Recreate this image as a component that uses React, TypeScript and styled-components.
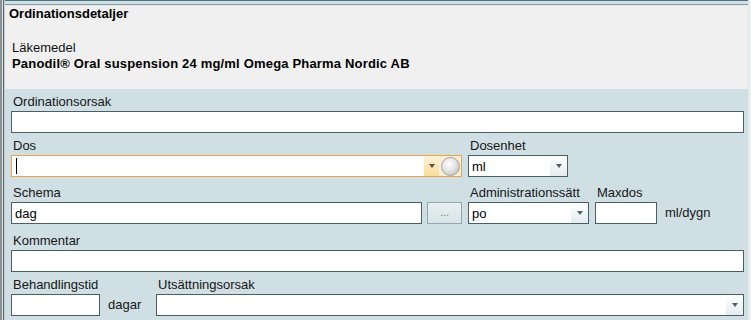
import styled, { createGlobalStyle } from 'styled-components';

const GlobalStyle = createGlobalStyle`
  html, body {
    margin: 0;
    padding: 0;
    background: #cfdfe3;
  }
  body {
    font-family: 'Liberation Sans', Arial, sans-serif;
    font-size: 13px;
    color: #111;
  }
`;

const Frame = styled.div`
  width: 751px;
  height: 320px;
  overflow: hidden;
  display: flex;
`;

const LeftRail = styled.div`
  flex: 0 0 5px;
  background: linear-gradient(
    to right,
    #87918f 0 2px,
    #e2e6e7 2px 3px,
    #56636a 3px 4px,
    #c6cfd2 4px 5px
  );
`;

const RightRail = styled.div`
  flex: 0 0 3px;
  background: linear-gradient(to right, #dbe6e9, #f2f5f6);
`;

const Column = styled.div`
  flex: 1;
  display: flex;
  flex-direction: column;
  min-width: 0;
`;

const TopRail = styled.div`
  flex: 0 0 6px;
  background: linear-gradient(
    to bottom,
    #4f7079 0 1px,
    #cde1e8 1px 4px,
    #8d9ba1 4px 5px,
    #e4e6e6 5px 6px
  );
`;

const Header = styled.div`
  flex: 0 0 83px;
  box-sizing: border-box;
  background: #f0f0f0;
  padding: 1px 0 0 4px;
`;

const Title = styled.div`
  font-weight: bold;
  line-height: 14px;
  color: #000;
`;

const DrugBlock = styled.div`
  margin-top: 20px;
  padding-left: 3px;
  display: flex;
  flex-direction: column;
  gap: 2px;
  line-height: 14px;
`;

const DrugName = styled.div`
  font-weight: bold;
  letter-spacing: 0.18px;
  color: #000;
`;

const Body = styled.div`
  flex: 1;
  background: #cfdfe3;
  padding: 6px 4px 0 6px;
  display: flex;
  flex-direction: column;
`;

const Row = styled.div<{ $top: number }>`
  display: flex;
  align-items: flex-end;
  gap: 6px;
  margin-top: ${(p) => p.$top}px;
`;

const Field = styled.div<{ $w?: number }>`
  display: flex;
  flex-direction: column;
  gap: 2px;
  flex: ${(p) => (p.$w ? `0 0 ${p.$w}px` : '1 1 auto')};
  min-width: 0;
`;

const Label = styled.div`
  height: 14px;
  line-height: 14px;
  padding-left: 2px;
  white-space: nowrap;
  color: #161616;
`;

const Box = styled.div<{ $focus?: boolean }>`
  box-sizing: border-box;
  flex: 0 0 auto;
  height: 22px;
  display: flex;
  align-items: stretch;
  background: #fff;
  border: 1px solid ${(p) => (p.$focus ? '#eba649' : '#4a5f66')};
`;

const Controls = styled.div`
  display: flex;
  gap: 5px;

  & > ${Box} {
    flex: 1 1 0;
  }
`;

const Value = styled.div`
  flex: 1;
  display: flex;
  align-items: center;
  padding-left: 3px;
  color: #000;
  white-space: nowrap;
  overflow: hidden;
`;

const Caret = styled.span`
  width: 1px;
  height: 16px;
  margin-left: 1px;
  background: #000;
`;

const DropZone = styled.div<{ $warm?: boolean }>`
  flex: 0 0 ${(p) => (p.$warm ? 15 : 17)}px;
  display: flex;
  align-items: center;
  justify-content: center;
  background: ${(p) =>
    p.$warm
      ? 'linear-gradient(to bottom, #fdf3d6, #f8dc98)'
      : 'linear-gradient(to bottom, #ffffff, #e3ecef)'};

  &::after {
    content: '';
    border-left: 3.5px solid transparent;
    border-right: 3.5px solid transparent;
    border-top: 4px solid ${(p) => (p.$warm ? '#5d4c30' : '#46636b')};
  }
`;

const SphereZone = styled.div`
  flex: 0 0 22px;
  display: flex;
  align-items: center;
  justify-content: center;
  background: #fbeed2;
`;

const Sphere = styled.div`
  width: 19px;
  height: 19px;
  box-sizing: border-box;
  border-radius: 50%;
  border: 1px solid #a3a3a3;
  background: radial-gradient(
    circle at 40% 35%,
    #ffffff 0%,
    #e4e4e4 45%,
    #b2b2b2 100%
  );
`;

const MoreButton = styled.button`
  flex: 0 0 35px;
  box-sizing: border-box;
  height: 22px;
  padding: 0 0 5px;
  display: flex;
  align-items: flex-end;
  justify-content: center;
  border: 1px solid #8fa7ad;
  background: linear-gradient(to bottom, #e8eff1, #d8e4e7);
  color: #687a80;
  font: 11px 'Liberation Sans', Arial, sans-serif;
  line-height: 1;
`;

const Unit = styled.div<{ $w?: number }>`
  flex: 0 0 ${(p) => (p.$w ? `${p.$w}px` : 'auto')};
  height: 22px;
  line-height: 22px;
  padding-left: 2px;
  box-sizing: border-box;
  color: #161616;
  white-space: nowrap;
`;

export default function App() {
  return (
    <>
      <GlobalStyle />
      <Frame>
        <LeftRail />
        <Column>
          <TopRail />
          <Header>
            <Title>Ordinationsdetaljer</Title>
            <DrugBlock>
              <div>Läkemedel</div>
              <DrugName>Panodil® Oral suspension 24 mg/ml Omega Pharma Nordic AB</DrugName>
            </DrugBlock>
          </Header>
          <Body>
            <Row $top={0}>
              <Field>
                <Label>Ordinationsorsak</Label>
                <Box />
              </Field>
            </Row>

            <Row $top={6}>
              <Field $w={451}>
                <Label>Dos</Label>
                <Box $focus>
                  <Value>
                    <Caret />
                  </Value>
                  <DropZone $warm />
                  <SphereZone>
                    <Sphere />
                  </SphereZone>
                </Box>
              </Field>
              <Field $w={100}>
                <Label>Dosenhet</Label>
                <Box>
                  <Value>ml</Value>
                  <DropZone />
                </Box>
              </Field>
            </Row>

            <Row $top={9}>
              <Field $w={451}>
                <Label>Schema</Label>
                <Controls>
                  <Box>
                    <Value>dag</Value>
                  </Box>
                  <MoreButton>...</MoreButton>
                </Controls>
              </Field>
              <Field $w={121}>
                <Label>Administrationssätt</Label>
                <Box>
                  <Value>po</Value>
                  <DropZone />
                </Box>
              </Field>
              <Field $w={62}>
                <Label>Maxdos</Label>
                <Box />
              </Field>
              <Unit>ml/dygn</Unit>
            </Row>

            <Row $top={10}>
              <Field>
                <Label>Kommentar</Label>
                <Box />
              </Field>
            </Row>

            <Row $top={6}>
              <Field $w={89}>
                <Label>Behandlingstid</Label>
                <Box />
              </Field>
              <Unit $w={44}>dagar</Unit>
              <Field>
                <Label>Utsättningsorsak</Label>
                <Box>
                  <Value />
                  <DropZone />
                </Box>
              </Field>
            </Row>
          </Body>
        </Column>
        <RightRail />
      </Frame>
    </>
  );
}
